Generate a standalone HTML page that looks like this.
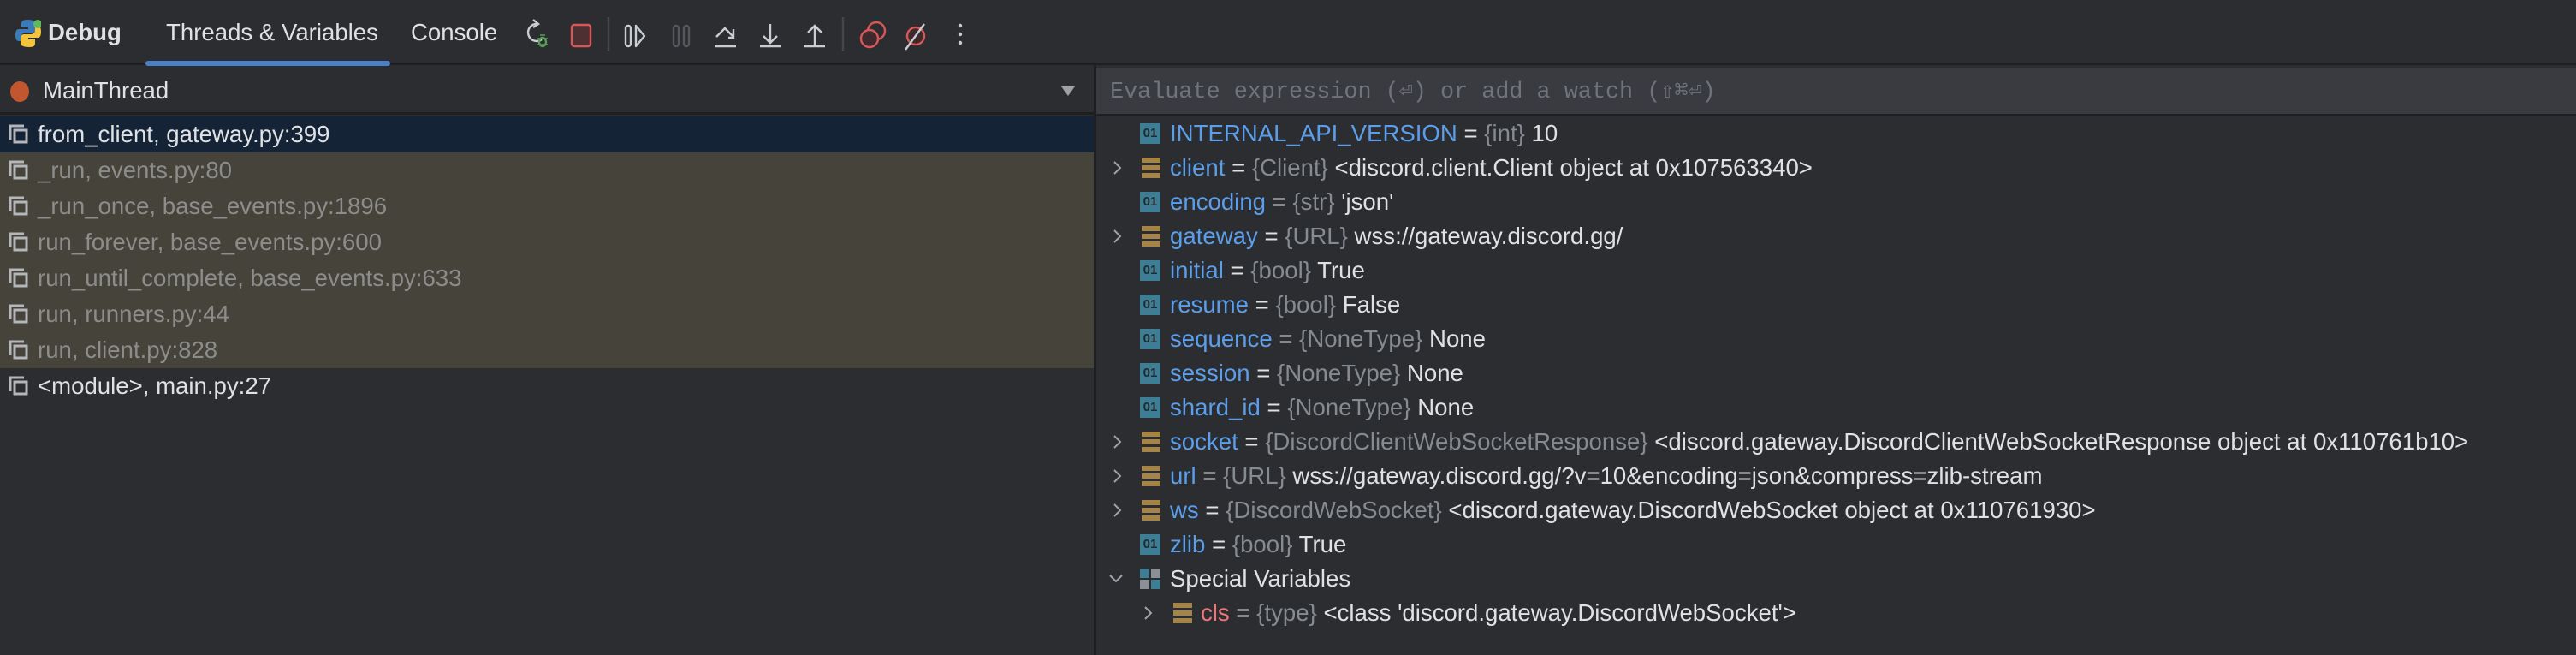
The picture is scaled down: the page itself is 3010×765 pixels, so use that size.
<!DOCTYPE html>
<html><head><meta charset="utf-8"><style>
*{margin:0;padding:0;box-sizing:border-box}
body{width:3010px;height:765px;background:#2b2d30;font-family:"Liberation Sans",sans-serif;font-size:27.6px;color:#dfe1e5;overflow:hidden;position:relative}
.abs{position:absolute}
.tb{left:0;top:0;width:3010px;height:76px;background:#2b2d30;border-bottom:3px solid #1e1f22}
.t{position:absolute;top:20px;line-height:36px;white-space:nowrap}
.row{position:absolute;left:0;height:42px;line-height:42px;white-space:nowrap;width:1278px}
.fi{position:absolute;left:10px;top:9px;width:24px;height:24px}
.fr{padding-left:44px}
.r{position:absolute;left:0;height:40px;line-height:40px;white-space:nowrap}
.n{color:#5c9eea}.g{color:#868a91}.red{color:#f0757a}
.i01{position:absolute;width:24px;height:24px;background:#3f7d94;color:#1e2a30;font-size:15px;line-height:24px;text-align:center;font-weight:bold;top:8px}
.fld{position:absolute;width:22px;height:24px;top:8px;background:repeating-linear-gradient(#a58448 0 6px,transparent 6px 9px)}
.arr{position:absolute;top:10px;width:20px;height:20px}
</style></head><body>
<svg width="0" height="0" style="position:absolute"><defs>
<g id="fic" fill="none" stroke="#b4b6ba" stroke-width="3"><path d="M2 18V2h16"/><rect x="7" y="7" width="14" height="14"/></g>
<path id="chev" d="M6 3l7 7-7 7" fill="none" stroke="#a0a3a8" stroke-width="2"/>
<path id="chevd" d="M3 6l7 7 7-7" fill="none" stroke="#a0a3a8" stroke-width="2"/>
</defs></svg>
<div class="abs tb"></div>
<svg class="abs" style="left:18px;top:22px" width="30" height="34" viewBox="0 0 30 34"><path d="M14 1c-6 0-7 2-7 5v4h8v2H4c-3 0-4 3-4 7s1 7 4 7h3v-5c0-3 2-5 5-5h8c2 0 4-2 4-4V6c0-3-3-5-10-5z" fill="#3d7ab8"/><path d="M16 33c6 0 7-2 7-5v-4h-8v-2h11c3 0 4-3 4-7s-1-7-4-7h-3v5c0 3-2 5-5 5H10c-2 0-4 2-4 4v6c0 3 3 5 10 5z" fill="#f3c53c"/><circle cx="26" cy="6" r="5" fill="#5fb85c"/></svg>
<div class="t" style="left:56px;font-weight:bold">Debug</div>
<div class="t" style="left:194px">Threads &amp; Variables</div>
<div class="abs" style="left:170px;top:71px;width:286px;height:6px;border-radius:3px;background:#4a80c7"></div>
<div class="t" style="left:480px">Console</div>
<svg class="abs" style="left:605px;top:20px" width="540" height="40" viewBox="605 20 540 40" fill="none" stroke-width="2.4">
<path d="M628 28a10 10 0 1 0 5 18" stroke="#c9ccd1"/><path d="M623 23l6 5-6 4" stroke="#c9ccd1"/>
<ellipse cx="634" cy="49" rx="4" ry="5" stroke="#5a9e5a"/><path d="M628 45l12 0M628 52h12M631 41l6 0" stroke="#5a9e5a" stroke-width="1.6"/>
<rect x="668" y="29" width="22" height="25" rx="3" fill="#4e2f32" stroke="#d9575a"/>
<line x1="711" y1="20" x2="711" y2="60" stroke="#44464a"/>
<rect x="731" y="30" width="6" height="24" rx="3" stroke="#c9ccd1"/><path d="M743 30l10 12-10 12z" stroke="#c9ccd1" stroke-linejoin="round"/>
<rect x="787" y="30" width="6" height="24" rx="3" stroke="#55575c"/><rect x="799" y="30" width="6" height="24" rx="3" stroke="#55575c"/>
<path d="M837 43l10-10 10 10M857 34v10h-6" stroke="#c9ccd1"/><path d="M836 54h24" stroke="#c9ccd1"/>
<path d="M900 28v22M892 42l8 8 8-8M888 54h24" stroke="#c9ccd1"/>
<path d="M952 54V31M944 38l8-8 8 8M940 54h24" stroke="#c9ccd1"/>
<line x1="985" y1="20" x2="985" y2="60" stroke="#44464a"/>
<circle cx="1024" cy="36" r="10" stroke="#d9575a"/><circle cx="1016" cy="45" r="10" fill="#3c2a2c" stroke="#d9575a"/>
<circle cx="1070" cy="42" r="10" fill="#3c2a2c" stroke="#d9575a"/><path d="M1058 58l22-30" stroke="#c9ccd1"/>
<circle cx="1122" cy="30" r="2.2" fill="#c9ccd1" stroke="none"/><circle cx="1122" cy="40" r="2.2" fill="#c9ccd1" stroke="none"/><circle cx="1122" cy="50" r="2.2" fill="#c9ccd1" stroke="none"/>
</svg>
<div class="abs" style="left:0;top:79px;width:1278px;height:55px;border-bottom:3px solid #1e1f22"></div>
<div class="abs" style="left:12px;top:95px;width:22px;height:24px;border-radius:50%;background:#c2562f"></div>
<div class="t" style="left:50px;top:88px">MainThread</div>
<div class="abs" style="left:1240px;top:101px;width:0;height:0;border-left:8px solid transparent;border-right:8px solid transparent;border-top:11px solid #9da0a5"></div>
<div class="abs" style="left:1278px;top:76px;width:3px;height:689px;background:#1e1f22"></div>
<div class="row" style="top:136px;background:#142336"><svg class="fi"><use href="#fic"/></svg><span class="fr">from_client, gateway.py:399</span></div>
<div class="abs" style="left:0;top:178px;width:1278px;height:252px;background:#45433a"></div>
<div class="row" style="top:178px;color:#8c8c8a"><svg class="fi"><use href="#fic"/></svg><span class="fr">_run, events.py:80</span></div>
<div class="row" style="top:220px;color:#8c8c8a"><svg class="fi"><use href="#fic"/></svg><span class="fr">_run_once, base_events.py:1896</span></div>
<div class="row" style="top:262px;color:#8c8c8a"><svg class="fi"><use href="#fic"/></svg><span class="fr">run_forever, base_events.py:600</span></div>
<div class="row" style="top:304px;color:#8c8c8a"><svg class="fi"><use href="#fic"/></svg><span class="fr">run_until_complete, base_events.py:633</span></div>
<div class="row" style="top:346px;color:#8c8c8a"><svg class="fi"><use href="#fic"/></svg><span class="fr">run, runners.py:44</span></div>
<div class="row" style="top:388px;color:#8c8c8a"><svg class="fi"><use href="#fic"/></svg><span class="fr">run, client.py:828</span></div>
<div class="row" style="top:430px"><svg class="fi"><use href="#fic"/></svg><span class="fr">&lt;module&gt;, main.py:27</span></div>
<div class="abs" style="left:1281px;top:79px;width:1729px;height:56px;background:#393b40;border-bottom:2px solid #1e1f22"></div>
<div class="abs" style="left:1297px;top:88px;line-height:40px;font-family:'Liberation Mono',monospace;font-size:26.8px;color:#6f737a;white-space:nowrap">Evaluate expression (⏎) or add a watch (⇧⌘⏎)</div>
<div class="abs" style="left:0;top:136px;width:3010px">
<div class="r" style="top:0"><span class="i01" style="left:1332px">01</span><span class="abs" style="left:1367px"><span class="n">INTERNAL_API_VERSION</span> = <span class="g">{int}</span> 10</span></div>
<div class="r" style="top:40px"><svg class="arr" style="left:1296px"><use href="#chev"/></svg><span class="fld" style="left:1334px"></span><span class="abs" style="left:1367px"><span class="n">client</span> = <span class="g">{Client}</span> &lt;discord.client.Client object at 0x107563340&gt;</span></div>
<div class="r" style="top:80px"><span class="i01" style="left:1332px">01</span><span class="abs" style="left:1367px"><span class="n">encoding</span> = <span class="g">{str}</span> 'json'</span></div>
<div class="r" style="top:120px"><svg class="arr" style="left:1296px"><use href="#chev"/></svg><span class="fld" style="left:1334px"></span><span class="abs" style="left:1367px"><span class="n">gateway</span> = <span class="g">{URL}</span> wss://gateway.discord.gg/</span></div>
<div class="r" style="top:160px"><span class="i01" style="left:1332px">01</span><span class="abs" style="left:1367px"><span class="n">initial</span> = <span class="g">{bool}</span> True</span></div>
<div class="r" style="top:200px"><span class="i01" style="left:1332px">01</span><span class="abs" style="left:1367px"><span class="n">resume</span> = <span class="g">{bool}</span> False</span></div>
<div class="r" style="top:240px"><span class="i01" style="left:1332px">01</span><span class="abs" style="left:1367px"><span class="n">sequence</span> = <span class="g">{NoneType}</span> None</span></div>
<div class="r" style="top:280px"><span class="i01" style="left:1332px">01</span><span class="abs" style="left:1367px"><span class="n">session</span> = <span class="g">{NoneType}</span> None</span></div>
<div class="r" style="top:320px"><span class="i01" style="left:1332px">01</span><span class="abs" style="left:1367px"><span class="n">shard_id</span> = <span class="g">{NoneType}</span> None</span></div>
<div class="r" style="top:360px"><svg class="arr" style="left:1296px"><use href="#chev"/></svg><span class="fld" style="left:1334px"></span><span class="abs" style="left:1367px"><span class="n">socket</span> = <span class="g">{DiscordClientWebSocketResponse}</span> &lt;discord.gateway.DiscordClientWebSocketResponse object at 0x110761b10&gt;</span></div>
<div class="r" style="top:400px"><svg class="arr" style="left:1296px"><use href="#chev"/></svg><span class="fld" style="left:1334px"></span><span class="abs" style="left:1367px"><span class="n">url</span> = <span class="g">{URL}</span> wss://gateway.discord.gg/?v=10&amp;encoding=json&amp;compress=zlib-stream</span></div>
<div class="r" style="top:440px"><svg class="arr" style="left:1296px"><use href="#chev"/></svg><span class="fld" style="left:1334px"></span><span class="abs" style="left:1367px"><span class="n">ws</span> = <span class="g">{DiscordWebSocket}</span> &lt;discord.gateway.DiscordWebSocket object at 0x110761930&gt;</span></div>
<div class="r" style="top:480px"><span class="i01" style="left:1332px">01</span><span class="abs" style="left:1367px"><span class="n">zlib</span> = <span class="g">{bool}</span> True</span></div>
<div class="r" style="top:520px"><svg class="arr" style="left:1294px"><use href="#chevd"/></svg><svg class="abs" style="left:1332px;top:8px" width="24" height="24"><rect x="0" y="0" width="11" height="11" fill="#3f7d94"/><rect x="13" y="0" width="11" height="11" fill="#8a9096"/><rect x="0" y="13" width="11" height="11" fill="#8a9096"/><rect x="13" y="13" width="11" height="11" fill="#3f7d94"/></svg><span class="abs" style="left:1367px">Special Variables</span></div>
<div class="r" style="top:560px"><svg class="arr" style="left:1332px"><use href="#chev"/></svg><span class="fld" style="left:1371px"></span><span class="abs" style="left:1403px"><span class="red">cls</span> = <span class="g">{type}</span> &lt;class 'discord.gateway.DiscordWebSocket'&gt;</span></div>
</div>
</body></html>
